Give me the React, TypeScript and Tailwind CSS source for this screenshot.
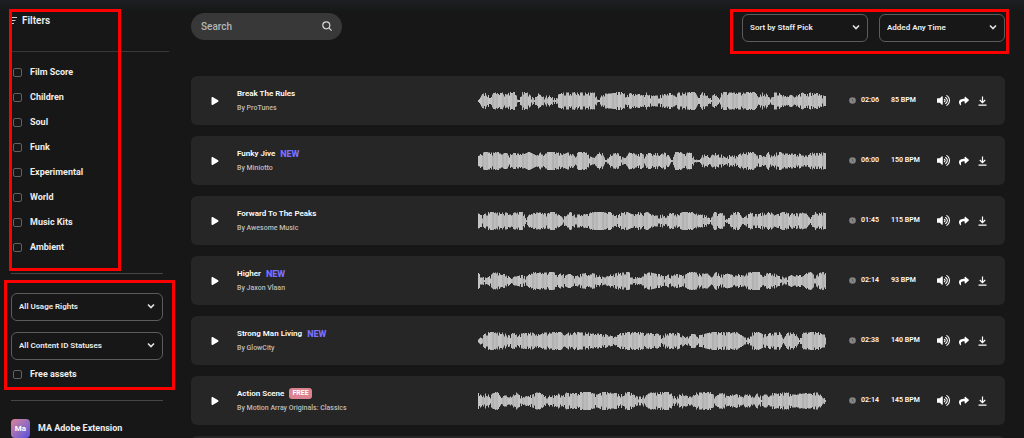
import React from 'react';
import { FaPlay, FaShare, FaVolumeUp } from 'react-icons/fa';

type Track = {
  title: string;
  artist: string;
  time: string;
  bpm: number;
  tag?: 'new' | 'free';
  wave: string;
};

const genres = ['Film Score', 'Children', 'Soul', 'Funk', 'Experimental', 'World', 'Music Kits', 'Ambient'];

// one digit per 4 units of width, 0 is silence and 9 is full height
const tracks: Track[] = [
  {
    title: 'Break The Rules', artist: 'ProTunes', time: '02:06', bpm: 85,
    wave: '078397869919953745536888988888177789958685855568858889939637399888899948728874646868785',
  },
  {
    title: 'Funky Jive', artist: 'Miniotto', time: '06:00', bpm: 150, tag: 'new',
    wave: '589889686877797586998878869984388067843886859686870997882066486636558899564948977777558888',
  },
  {
    title: 'Forward To The Peaks', artist: 'Awesome Music', time: '01:45', bpm: 115,
    wave: '758998886899378887996469666789998956997697975564886999866529782599358778995798787872988',
  },
  {
    title: 'Higher', artist: 'Jaxon Vlaan', time: '02:14', bpm: 93, tag: 'new',
    wave: '8435987734564798889958575578585536688993437887746576589877739667657589994887543648489579',
  },
  {
    title: 'Strong Man Living', artist: 'GlowCity', time: '02:38', bpm: 140, tag: 'new',
    wave: '25899887595788868889995899888777765488999987868488886367567899989896438986888928882889996',
  },
  {
    title: 'Action Scene', artist: 'Motion Array Originals: Classics', time: '02:14', bpm: 145, tag: 'free',
    wave: '9485893636854568875567587889998689978689854568889995486458899847856764763847487888667787893',
  },
];

const shades = ['#c4c4c4', '#c1c1c1', '#b2b2b2', '#bcbcbc', '#b6b6b6'];

const Waveform = ({ wave }: { wave: string }) => {
  const bars = Array.from({ length: 348 }, (_, i) => {
    const pos = (i * wave.length) / 348;
    const at = Math.floor(pos);
    const a = Number(wave[at]);
    const b = Number(wave[Math.min(at + 1, wave.length - 1)]);
    const level = a + (b - a) * (pos - at);
    // short uneven notches between the peaks
    const noise = ((i * 7919 + a * 104729 + i * i * 31) % 97) / 97;
    const notch = noise < 0.12 ? 6 : noise < 0.3 ? 3 : noise < 0.5 ? 1 : 0;
    return Math.min(18, Math.max(2, Math.round(level * 2.1 - notch)));
  });

  return (
    <svg viewBox="0 0 348 18" preserveAspectRatio="none" className="h-[18px] min-w-0 flex-1" aria-hidden="true">
      {bars.map((h, i) => (
        <rect key={i} x={i} y={9 - h / 2} width={1} height={h} fill={shades[(i >> 1) % shades.length]} />
      ))}
    </svg>
  );
};

const Select = ({ label, className }: { label: string; className: string }) => (
  <div className={`relative h-7 ${className}`}>
    <select
      aria-label={label}
      className="h-full w-full appearance-none rounded-md border border-[#5c5c5c] bg-transparent px-[7px] text-[8px] font-semibold text-[#ececec]"
    >
      <option>{label}</option>
    </select>
    <svg viewBox="0 0 8 8" className="pointer-events-none absolute top-[10px] right-2 size-2" fill="none" stroke="#e4e4e4" strokeWidth="1.6">
      <path d="M1 2.5 4 5.5 7 2.5" />
    </svg>
  </div>
);

const Check = ({ label }: { label: string }) => (
  <label className="flex h-[25px] items-center gap-2 pl-[2px] text-[9px] font-bold text-[#ededed]">
    <input type="checkbox" className="size-[9px] appearance-none rounded-[2px] border border-[#626262] checked:bg-[#7a6ff0]" />
    {label}
  </label>
);

const TrackRow = ({ track }: { track: Track }) => (
  <li className="flex h-[49px] shrink-0 items-center rounded-md bg-[#262626] pr-[18px] pl-5 text-white">
    <button type="button" aria-label={`Play ${track.title}`} className="w-[26px] shrink-0">
      <FaPlay className="size-2" />
    </button>
    <div className="w-[241px] shrink-0">
      <div className="flex h-[14px] items-center gap-[5px]">
        <span className="text-[8px] leading-3 font-semibold">{track.title}</span>
        {track.tag === 'new' && <span className="text-[9px] leading-3 font-extrabold text-[#7b70ff]">NEW</span>}
        {track.tag === 'free' && (
          <span className="rounded-[3px] bg-[#dc8290] px-[3px] text-[7px] leading-[11px] font-bold">FREE</span>
        )}
      </div>
      <p className="text-[7px] leading-[14px] font-medium text-[#bdbdbd]">By {track.artist}</p>
    </div>
    <Waveform wave={track.wave} />
    <div className="ml-[23px] flex w-[42px] shrink-0 items-center gap-[5px] text-[7px] font-semibold">
      <svg viewBox="0 0 8 8" className="size-[7px]">
        <circle cx="4" cy="4" r="3.8" fill="#858585" />
        <path d="M4 2v2.3l1.5.8" fill="none" stroke="#555" strokeWidth="0.8" />
      </svg>
      <span>{track.time}</span>
    </div>
    <span className="w-[46px] shrink-0 text-[7px] font-semibold">{track.bpm} BPM</span>
    <div className="flex shrink-0 items-center gap-[9px]">
      <button type="button" aria-label="Volume">
        <FaVolumeUp className="size-[13px]" />
      </button>
      <button type="button" aria-label="Share">
        <FaShare className="size-[10px]" />
      </button>
      <button type="button" aria-label="Download">
        <svg viewBox="0 0 9 10" className="h-[10px] w-[9px]" fill="none" stroke="currentColor" strokeWidth="1.2">
          <path d="M4.5 0.5v6M1.8 4 4.5 6.7 7.2 4M0.5 9.2h8" />
        </svg>
      </button>
    </div>
  </li>
);

const App = () => {
  return (
    <div className="relative flex h-screen overflow-hidden bg-[#171717] bg-linear-to-b from-[#1d2023] to-[#171717] to-[12px] pr-[19px] pl-[11px] font-['Roboto',sans-serif]">
      <aside className="w-[158px] shrink-0">
        <div className="flex h-[51px] items-start pt-[13px]">
          <h2 className="flex items-center gap-[5px] text-[10px] leading-4 font-semibold text-[#ededed]">
            <svg viewBox="0 0 6 8" className="h-2 w-[6px]" stroke="#cfcfcf" strokeWidth="1">
              <path d="M0 .5h6M0 3.5h4.5M0 6.5h3" />
            </svg>
            Filters
          </h2>
        </div>
        <hr className="border-[#383838]" />
        <div className="mt-[8px] pb-[13px]">
          {genres.map((g) => (
            <Check key={g} label={g} />
          ))}
        </div>
        <div className="w-[152px]">
          <hr className="border-[#454545]" />
          <div className="mt-[18px] flex flex-col gap-[11px]">
            <Select label="All Usage Rights" className="w-full" />
            <Select label="All Content ID Statuses" className="w-full" />
          </div>
          <div className="mt-[3px] mb-[13px]">
            <Check label="Free assets" />
          </div>
          <hr className="border-[#454545]" />
          <a href="#" className="mt-[18px] flex items-center gap-2 text-[9px] font-bold text-[#ededed]">
            <span className="flex size-[19px] items-center justify-center rounded-[4px] bg-linear-to-br from-[#dd7f92] to-[#5a4be0] text-[8px] font-bold text-white">
              Ma
            </span>
            MA Adobe Extension
          </a>
        </div>
      </aside>

      <main className="ml-[22px] min-w-0 flex-1 pt-[13px]">
        <div className="flex items-start justify-between">
          <div className="relative h-[27px] w-[151px]">
            <input
              type="text"
              aria-label="Search"
              placeholder="Search"
              className="h-full w-full rounded-full bg-[#383838] pr-8 pl-[10px] text-[10px] font-medium text-white outline-none placeholder:text-[#b5b5b5]"
            />
            <svg viewBox="0 0 10 10" className="absolute top-2 right-[10px] size-[10px]" fill="none" stroke="#d6d6d6" strokeWidth="1.2">
              <circle cx="4.3" cy="4.3" r="3.5" />
              <path d="M6.8 6.8 9.6 9.6" />
            </svg>
          </div>
          <div className="flex gap-[11px]">
            <Select label="Sort by Staff Pick" className="w-[126px]" />
            <Select label="Added Any Time" className="w-[126px]" />
          </div>
        </div>
        <ul className="mt-[35px] flex flex-col gap-[11px]">
          {tracks.map((t) => (
            <TrackRow key={t.title} track={t} />
          ))}
          {/* next row, still loading */}
          <li className="h-[49px] shrink-0 rounded-md bg-[#262626]" aria-hidden="true" />
        </ul>
      </main>

      {/* highlight frames */}
      <div className="pointer-events-none absolute top-[9px] left-[9px] h-[262px] w-[112px] border-3 border-[#ff0000]" />
      <div className="pointer-events-none absolute top-[280px] left-1 h-[110px] w-[171px] border-3 border-[#ff0000]" />
      <div className="pointer-events-none absolute top-[9px] right-[15px] h-[45px] w-[279px] border-3 border-[#ff0000]" />
    </div>
  );
};

export default App;
